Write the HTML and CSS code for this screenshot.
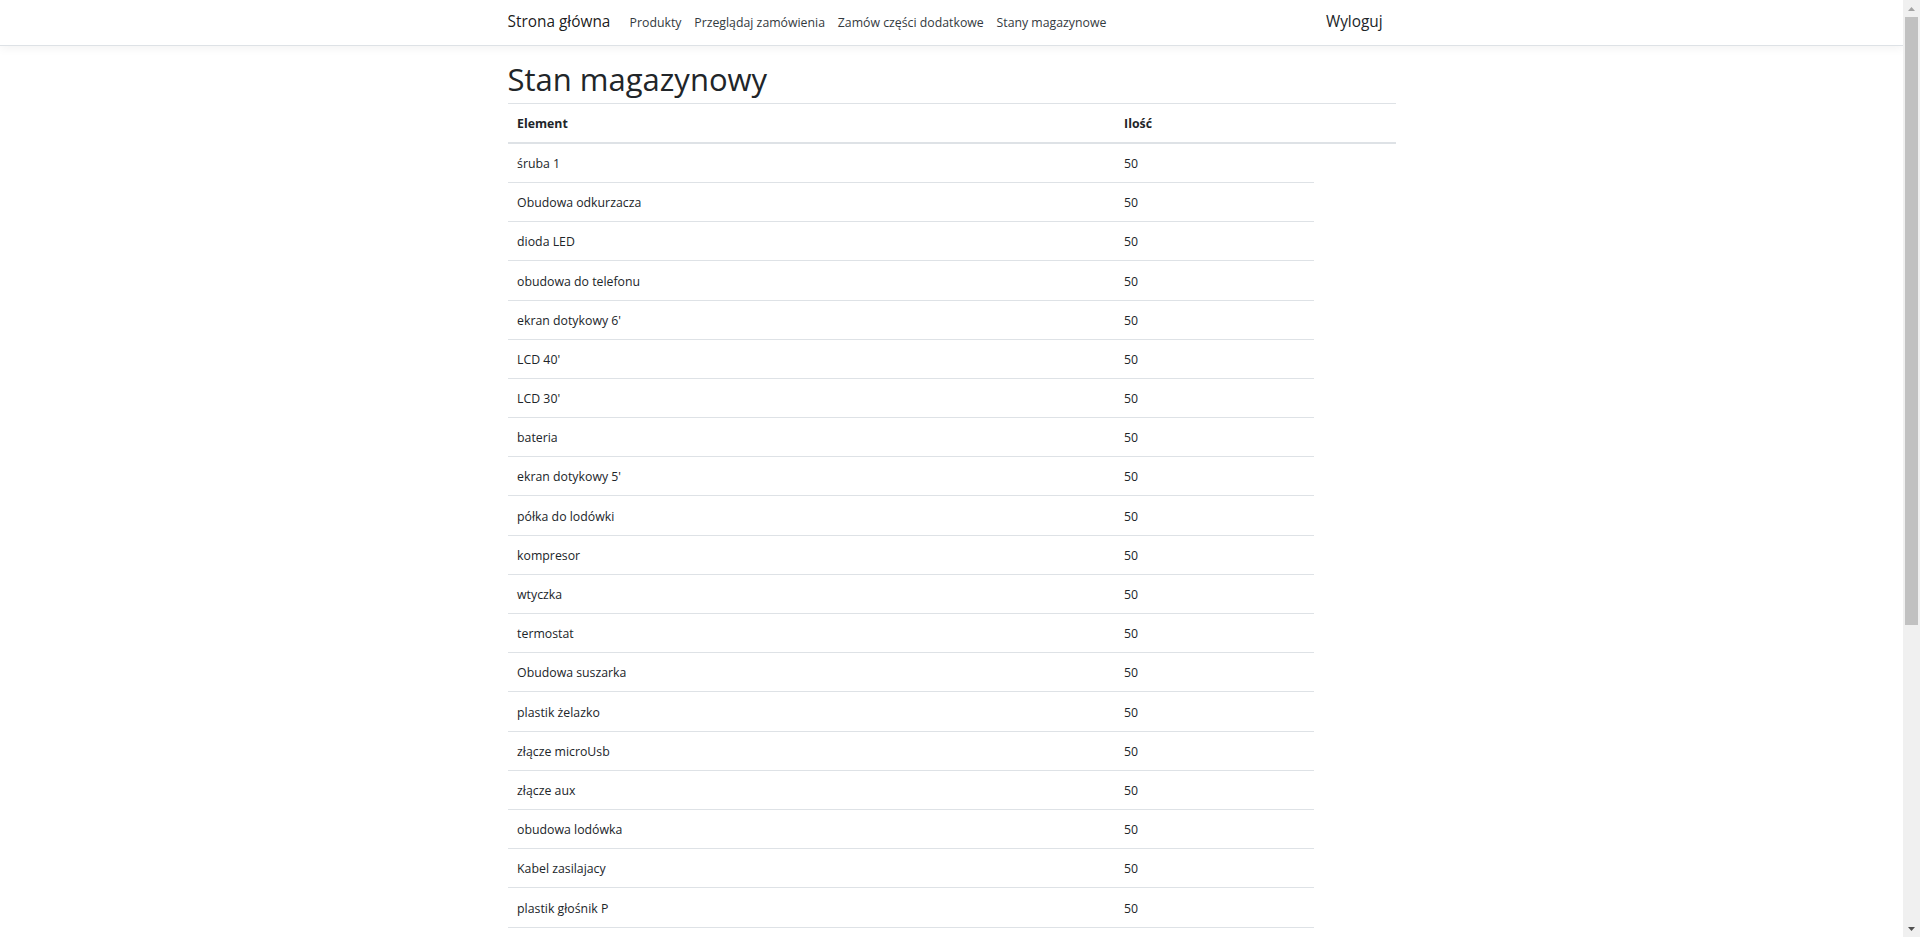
FILE: index.html
```html
<!DOCTYPE html>
<html lang="pl">
<head>
<meta charset="utf-8">
<title>Stan magazynowy</title>
<link rel="stylesheet" href="styles.css">
</head>
<body>
<header>
  <nav class="navbar">
    <div class="container nav-inner">
      <a class="brand" href="#">Strona główna</a>
      <ul class="nav-list">
        <li><a class="nav-link" href="#">Produkty</a></li>
        <li><a class="nav-link" href="#">Przeglądaj zamówienia</a></li>
        <li><a class="nav-link" href="#">Zamów części dodatkowe</a></li>
        <li><a class="nav-link" href="#">Stany magazynowe</a></li>
      </ul>
      <a class="logout" href="#">Wyloguj</a>
    </div>
  </nav>
</header>
<main class="container main">
  <h1 class="title">Stan magazynowy</h1>
  <table class="stock">
    <thead>
      <tr>
        <th class="c-name">Element</th>
        <th class="c-qty">Ilość</th>
        <th class="c-extra"></th>
      </tr>
    </thead>
    <tbody>
      <tr><td>śruba 1</td><td>50</td></tr>
      <tr><td>Obudowa odkurzacza</td><td>50</td></tr>
      <tr><td>dioda LED</td><td>50</td></tr>
      <tr><td>obudowa do telefonu</td><td>50</td></tr>
      <tr><td>ekran dotykowy 6'</td><td>50</td></tr>
      <tr><td>LCD 40'</td><td>50</td></tr>
      <tr><td>LCD 30'</td><td>50</td></tr>
      <tr><td>bateria</td><td>50</td></tr>
      <tr><td>ekran dotykowy 5'</td><td>50</td></tr>
      <tr><td>półka do lodówki</td><td>50</td></tr>
      <tr><td>kompresor</td><td>50</td></tr>
      <tr><td>wtyczka</td><td>50</td></tr>
      <tr><td>termostat</td><td>50</td></tr>
      <tr><td>Obudowa suszarka</td><td>50</td></tr>
      <tr><td>plastik żelazko</td><td>50</td></tr>
      <tr><td>złącze microUsb</td><td>50</td></tr>
      <tr><td>złącze aux</td><td>50</td></tr>
      <tr><td>obudowa lodówka</td><td>50</td></tr>
      <tr><td>Kabel zasilajacy</td><td>50</td></tr>
      <tr><td>plastik głośnik P</td><td>50</td></tr>
      <tr><td>plastik głośnik L</td><td>50</td></tr>
      <tr><td>głośnik</td><td>50</td></tr>
      <tr><td>wzmacniacz</td><td>50</td></tr>
      <tr><td>grzałka</td><td>50</td></tr>
      <tr><td>silnik</td><td>50</td></tr>
      <tr><td>wentylator</td><td>50</td></tr>
      <tr><td>przycisk</td><td>50</td></tr>
      <tr><td>kabel USB</td><td>50</td></tr>
      <tr><td>płyta główna</td><td>50</td></tr>
      <tr><td>procesor</td><td>50</td></tr>
    </tbody>
  </table>
</main>
<div class="scrollbar" aria-hidden="true">
  <span class="sb-btn">
    <svg width="7" height="4" viewBox="0 0 7 4"><path d="M3.5 0 L7 4 L0 4 Z" fill="#a3a3a3"/></svg>
  </span>
  <span class="sb-track"><span class="sb-thumb"></span></span>
  <span class="sb-btn">
    <svg width="7" height="4" viewBox="0 0 7 4"><path d="M0 0 L7 0 L3.5 4 Z" fill="#505050"/></svg>
  </span>
</div>
</body>
</html>
```
FILE: styles.css
```css
html, body {
  margin: 0;
  padding: 0;
}
body {
  padding-right: 17px;
  font-family: "Open Sans", "Noto Sans", sans-serif;
  font-size: 12.3px;
  line-height: 19.2px;
  color: #212529;
  background: #fff;
}
a {
  text-decoration: none;
}
.container {
  box-sizing: border-box;
  width: 912px;
  margin: 0 auto;
  padding: 0 12px;
}
.navbar {
  background: #fff;
  border-bottom: 1px solid #dee2e6;
  box-shadow: 0 3.2px 9.6px rgba(0, 0, 0, 0.05);
  padding: 6.4px 0;
  margin-bottom: 12px;
}
.nav-inner {
  display: flex;
  align-items: center;
  height: 32px;
}
.brand {
  font-size: 15.4px;
  line-height: 24px;
  padding: 4px 0;
  margin-right: 12.8px;
  color: rgba(0, 0, 0, 0.9);
}
.nav-list {
  display: flex;
  list-style: none;
  margin: 0;
  padding: 0;
  flex: 1;
}
.nav-link {
  display: block;
  padding: 6.4px;
  line-height: 19.2px;
  color: #343a40;
}
.logout {
  font-size: 15.4px;
  line-height: 24px;
  padding: 4px 12.8px 4px 6.4px;
  color: #212529;
}
.main {
  padding-bottom: 12.8px;
  margin-bottom: 60px;
}
.title {
  font-size: 31px;
  font-weight: 500;
  line-height: 38.4px;
  padding-top: 2px;
  margin: 0 0 4.4px;
}
.stock {
  width: 100%;
  border-collapse: collapse;
  table-layout: fixed;
}
.stock th,
.stock td {
  box-sizing: border-box;
  text-align: left;
  padding: 10.2px 9.6px 8.8px;
  line-height: 19.2px;
  border-top: 1px solid #dee2e6;
  vertical-align: top;
}
.stock th {
  font-weight: 700;
  vertical-align: bottom;
  border-bottom: 2px solid #dee2e6;
}
.c-name { width: 607px; }
.c-qty { width: 199px; }
.c-extra { width: auto; }

/* imitation of the window's classic scrollbar */
.scrollbar {
  position: fixed;
  top: 0;
  right: 0;
  width: 17px;
  height: 100vh;
  background: #f0f0f0;
  display: flex;
  flex-direction: column;
}
.sb-btn {
  height: 17px;
  flex: none;
  display: flex;
  align-items: center;
  justify-content: center;
}
.sb-btn svg {
  display: block;
}
.sb-track {
  flex: 1;
  display: flex;
  flex-direction: column;
}
.sb-thumb {
  height: 608px;
  margin: 0 2px;
  background: #c1c1c1;
}
```
